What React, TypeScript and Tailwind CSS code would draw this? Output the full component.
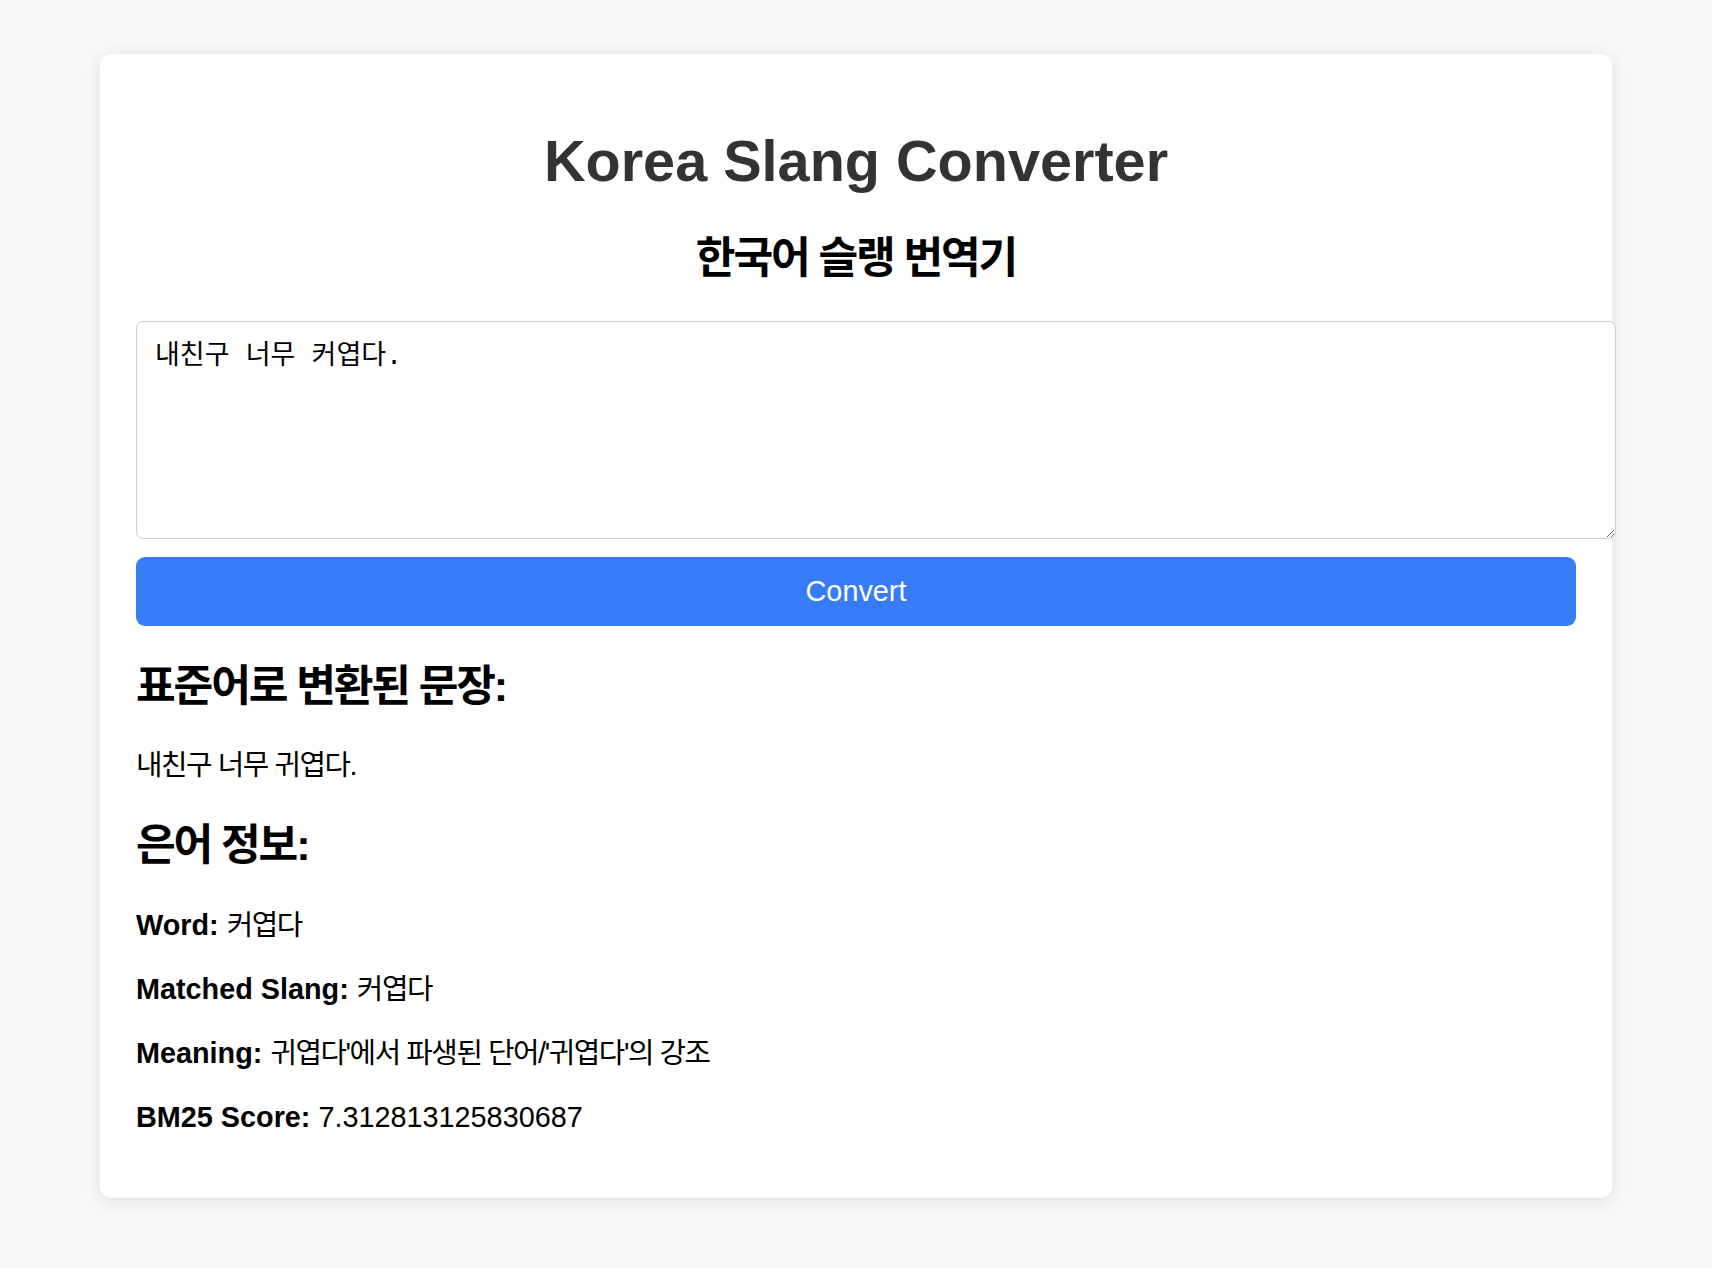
const ko = 'tracking-[-0.05em]';

function InfoRow({ label, value, korean = true }: { label: string; value: string; korean?: boolean }) {
  return (
    <p className="mt-[29px] text-[28.8px] leading-[35px] text-black">
      <strong className="font-bold">{label}:</strong>{' '}
      <span className={korean ? ko : ''}>{value}</span>
    </p>
  );
}

export default function App() {
  return (
    <div
      className="min-h-screen bg-[#f8f8f8] pt-[54px] pb-[71px]"
      style={{ fontFamily: '"Liberation Sans", "Noto Sans CJK KR", sans-serif' }}
    >
      <div className="mx-auto w-[1512px] rounded-[12px] bg-white px-[36px] pt-[36px] pb-[63px] shadow-[0_3px_18px_rgba(0,0,0,0.1)]">
        {/* Header */}
        <h1 className="mt-[38px] text-center text-[57.6px] font-bold leading-[66px] text-[#333]">
          Korea Slang Converter
        </h1>
        <h2 className={`mt-[39px] text-center text-[43.2px] font-bold leading-[50px] text-black ${ko}`}>
          한국어 슬랭 번역기
        </h2>

        {/* Input */}
        <textarea
          className="mt-[38px] block h-[218px] w-[1480px] rounded-[7px] border border-[#ccc] bg-white px-[18px] py-[16px] text-[27px] leading-[38px] text-black outline-none"
          style={{ fontFamily: '"Liberation Mono", "Noto Sans CJK KR", monospace' }}
          defaultValue="내친구 너무 커엽다."
        />
        <button className="mt-[18px] block h-[69px] w-full rounded-[9px] bg-[#377cf5] text-[28.8px] text-white">
          Convert
        </button>

        {/* Result */}
        <h2 className={`mt-[35px] text-[43.2px] font-bold leading-[50px] text-black ${ko}`}>
          표준어로 변환된 문장:
        </h2>
        <p className={`mt-[37px] text-[28.8px] leading-[35px] text-black ${ko}`}>내친구 너무 귀엽다.</p>

        <h2 className={`mt-[37px] text-[43.2px] font-bold leading-[50px] text-black ${ko}`}>은어 정보:</h2>
        <p className="mt-[38px] text-[28.8px] leading-[35px] text-black">
          <strong className="font-bold">Word:</strong> <span className={ko}>커엽다</span>
        </p>
        <InfoRow label="Matched Slang" value="커엽다" />
        <InfoRow label="Meaning" value="귀엽다'에서 파생된 단어/'귀엽다'의 강조" />
        <InfoRow label="BM25 Score" value="7.312813125830687" korean={false} />
      </div>
    </div>
  );
}
